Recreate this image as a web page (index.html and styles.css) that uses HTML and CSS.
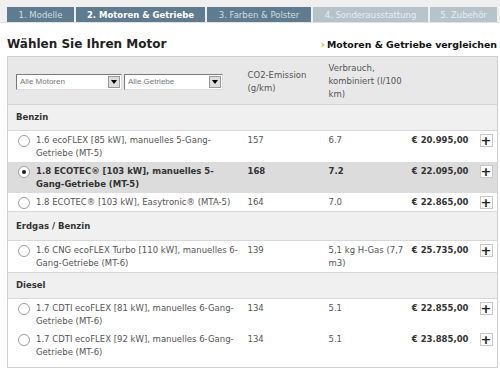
FILE: index.html
```html
<!DOCTYPE html>
<html lang="de">

<head>
  <meta charset="UTF-8">
  <title>Motoren &amp; Getriebe</title>
  <link rel="stylesheet" href="styles.css">
</head>

<body>
  <div class="steps">
    <span class="step done s1">1. Modelle</span>
    <span class="step active s2">2. Motoren &amp; Getriebe</span>
    <span class="step done s3">3. Farben &amp; Polster</span>
    <span class="step todo s4">4. Sonderausstattung</span>
    <span class="step todo s5">5. Zubehör</span>
  </div>

  <div class="title-row">
    <h1>Wählen Sie Ihren Motor</h1>
    <a class="compare" href="#"><span class="chev">›</span>Motoren &amp; Getriebe vergleichen</a>
  </div>

  <table class="engines">
    <colgroup>
      <col class="k-name">
      <col class="k-co2">
      <col class="k-use">
      <col class="k-price">
      <col class="k-add">
    </colgroup>
    <thead>
      <tr>
        <th class="c-name">
          <div class="filters">
            <span class="sel w1">Alle Motoren<i class="arrow"></i></span>
            <span class="sel w2">Alle Getriebe<i class="arrow"></i></span>
          </div>
        </th>
        <th class="c-co2">CO2-Emission (g/km)</th>
        <th class="c-use">Verbrauch, kombiniert (l/100 km)</th>
        <th></th>
        <th></th>
      </tr>
    </thead>
    <tbody>
      <tr class="group"><td colspan="5">Benzin</td></tr>
      <tr>
        <td class="c-name"><span class="radio"></span>1.6 ecoFLEX [85 kW], manuelles 5-Gang-Getriebe (MT-5)</td>
        <td>157</td>
        <td>6.7</td>
        <td class="c-price">€ 20.995,00</td>
        <td class="c-add"><span class="plus">+</span></td>
      </tr>
      <tr class="selected">
        <td class="c-name"><span class="radio on"></span>1.8 ECOTEC® [103 kW], manuelles 5-Gang-Getriebe (MT-5)</td>
        <td>168</td>
        <td>7.2</td>
        <td class="c-price">€ 22.095,00</td>
        <td class="c-add"><span class="plus">+</span></td>
      </tr>
      <tr>
        <td class="c-name"><span class="radio"></span>1.8 ECOTEC® [103 kW], Easytronic® (MTA-5)</td>
        <td>164</td>
        <td>7.0</td>
        <td class="c-price">€ 22.865,00</td>
        <td class="c-add"><span class="plus">+</span></td>
      </tr>
      <tr class="group tall"><td colspan="5">Erdgas / Benzin</td></tr>
      <tr>
        <td class="c-name"><span class="radio"></span>1.6 CNG ecoFLEX Turbo [110 kW], manuelles 6-Gang-Getriebe (MT-6)</td>
        <td>139</td>
        <td>5,1 kg H-Gas (7,7 m3)</td>
        <td class="c-price">€ 25.735,00</td>
        <td class="c-add"><span class="plus">+</span></td>
      </tr>
      <tr class="group"><td colspan="5">Diesel</td></tr>
      <tr>
        <td class="c-name"><span class="radio"></span>1.7 CDTI ecoFLEX [81 kW], manuelles 6-Gang-Getriebe (MT-6)</td>
        <td>134</td>
        <td>5.1</td>
        <td class="c-price">€ 22.855,00</td>
        <td class="c-add"><span class="plus">+</span></td>
      </tr>
      <tr class="last">
        <td class="c-name"><span class="radio"></span>1.7 CDTI ecoFLEX [92 kW], manuelles 6-Gang-Getriebe (MT-6)</td>
        <td>134</td>
        <td>5.1</td>
        <td class="c-price">€ 23.885,00</td>
        <td class="c-add"><span class="plus">+</span></td>
      </tr>
    </tbody>
  </table>
</body>

</html>
```

FILE: styles.css
```css
body {
  margin: 0;
  background: #fff;
  font-family: "DejaVu Sans", Verdana, sans-serif;
  font-size: 8.5px;
  color: #555;
}

/* Schritte oben */
.steps {
  display: flex;
  gap: 2px;
  padding: 7px 3px 0 7px;
  height: 15px;
  background: #efefef;
  border-bottom: 1px solid #e2e2e2;
}

.step {
  display: flex;
  align-items: center;
  justify-content: center;
  height: 15px;
  white-space: nowrap;
}

.s1 { width: 67px; }
.s2 { width: 129px; }
.s3 { width: 104px; }
.s4 { width: 115px; }
.s5 { width: 67px; }

.step.done {
  background: #5e7b90;
  color: #d3dce2;
}

.step.active {
  background: #5e7b90;
  color: #fff;
  font-weight: bold;
}

.step.todo {
  background: #b7c3cb;
  color: #e8edf0;
}

.title-row {
  display: flex;
  justify-content: space-between;
  align-items: baseline;
  padding: 14px 3px 0 7px;
}

h1 {
  margin: 0;
  font-size: 12px;
  color: #222;
}

.compare {
  font-weight: bold;
  font-size: 9.4px;
  color: #111;
  text-decoration: none;
}

.chev {
  color: #e8b400;
  font-size: 11px;
  margin-right: 2px;
}

/* Tabelle */
.engines {
  margin: 5px 3px 0 7px;
  width: 490px;
  border-collapse: collapse;
  border: 1px solid #cfcfcf;
  table-layout: fixed;
}

.k-name { width: 236px; }
.k-co2 { width: 81px; }
.k-use { width: 86px; }
.k-price { width: 62px; }
.k-add { width: 25px; }

.engines th,
.engines td {
  text-align: left;
  vertical-align: top;
  font-weight: normal;
  line-height: 13px;
  padding: 3px 4px 2px 4px;
}

.engines thead th {
  background: #e8e8e8;
  padding: 5px 4px 3px 4px;
  border-bottom: 1px solid #d4d4d4;
}

.engines thead th.c-name {
  vertical-align: middle;
  padding-left: 8px;
}

.engines thead th.c-co2 {
  vertical-align: middle;
}

.filters {
  display: flex;
  gap: 2px;
}

.sel {
  position: relative;
  display: flex;
  align-items: center;
  height: 16px;
  background: #fff;
  border: 1px solid #7a7a7a;
  border-right-color: #ddd;
  border-bottom-color: #ddd;
  color: #777;
  font-family: "Liberation Sans", Arial, sans-serif;
  font-size: 8px;
  padding-left: 3px;
  box-sizing: border-box;
}

.w1 { width: 106px; }
.w2 { width: 99px; }

.arrow {
  position: absolute;
  right: 1px;
  top: 1px;
  width: 12px;
  height: 12px;
  background: #ddd;
  border: 1px solid #999;
  box-sizing: border-box;
}

.arrow::after {
  content: "";
  position: absolute;
  left: 2px;
  top: 3px;
  border-left: 3px solid transparent;
  border-right: 3px solid transparent;
  border-top: 4px solid #000;
}

.engines tr.group td {
  background: #f0f0f0;
  font-weight: bold;
  color: #333;
  padding: 6px 8px 6px 8px;
  border-top: 1px solid #d8d8d8;
  border-bottom: 1px solid #d8d8d8;
}

.engines tr.group.tall td {
  padding-top: 8px;
  padding-bottom: 7px;
}

.engines td.c-name {
  position: relative;
  padding-left: 28px;
  padding-right: 3px;
}

.engines tr.selected td {
  background: #dcdcdc;
  font-weight: bold;
  color: #333;
}

.engines tr.last td {
  padding-bottom: 8px;
}

.engines td.c-price {
  text-align: right;
  font-weight: bold;
  color: #333;
  white-space: nowrap;
  padding-left: 0;
  padding-right: 4px;
}

.engines td.c-add {
  padding-left: 7px;
  padding-right: 0;
}

.radio {
  position: absolute;
  left: 10px;
  top: 4px;
  width: 12px;
  height: 12px;
  border: 1px solid #a0a0a0;
  border-radius: 50%;
  background: #fff;
  box-sizing: border-box;
}

.radio.on::after {
  content: "";
  position: absolute;
  left: 3px;
  top: 3px;
  width: 4px;
  height: 4px;
  border-radius: 50%;
  background: #222;
}

.plus {
  display: flex;
  align-items: center;
  justify-content: center;
  width: 13px;
  height: 13px;
  box-sizing: border-box;
  border: 1px solid #c8c8c8;
  background: #fff;
  color: #222;
  font-size: 13px;
  line-height: 12px;
  font-weight: bold;
}
```
